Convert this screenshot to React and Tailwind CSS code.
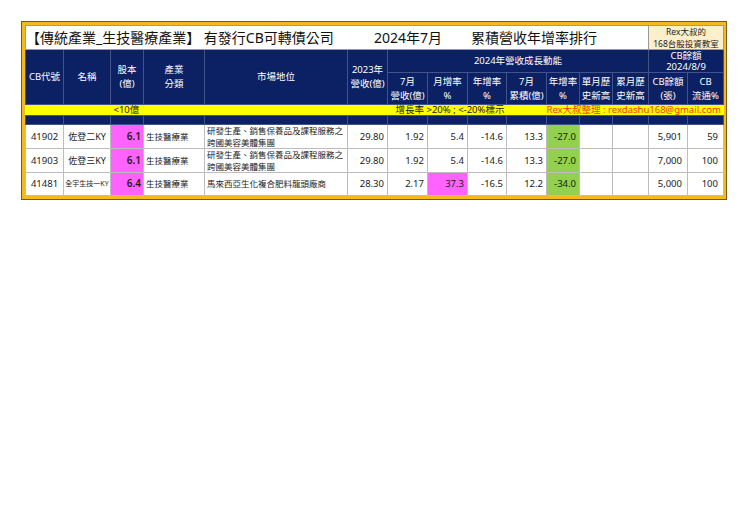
const rows = [
  {
    code: "41902",
    name: "佐登二KY",
    cap: "6.1",
    ind: "生技醫療業",
    pos: ["研發生產、銷售保養品及課程服務之", "跨國美容美體集團"],
    rev: "29.80",
    m: "1.92",
    mom: "5.4",
    yoy: "-14.6",
    cum: "13.3",
    cumYoy: "-27.0",
    cb: "5,901",
    pct: "59",
  },
  {
    code: "41903",
    name: "佐登三KY",
    cap: "6.1",
    ind: "生技醫療業",
    pos: ["研發生產、銷售保養品及課程服務之", "跨國美容美體集團"],
    rev: "29.80",
    m: "1.92",
    mom: "5.4",
    yoy: "-14.6",
    cum: "13.3",
    cumYoy: "-27.0",
    cb: "7,000",
    pct: "100",
  },
  {
    code: "41481",
    name: "全宇生技一KY",
    small: true,
    cap: "6.4",
    ind: "生技醫療業",
    pos: ["馬來西亞生化複合肥料龍頭廠商"],
    rev: "28.30",
    m: "2.17",
    mom: "37.3",
    momHi: true,
    yoy: "-16.5",
    cum: "12.2",
    cumYoy: "-34.0",
    cb: "5,000",
    pct: "100",
  },
];

const th = "border border-[#42528a] font-normal text-center align-middle p-0";
const td = "border border-[#bdbdbd] align-middle p-0";
const num = `${td} text-right pr-[3px] text-[9.5px]`;

export default function App() {
  return (
    <div className="min-h-screen bg-white pl-[21px] pt-[21px] font-['Noto_Sans','Noto_Sans_CJK_TC',sans-serif] text-[#1a1a1a]">
      <div className="w-[706px] border border-[#7a5b08] bg-[#f5b820] p-[3px]">
        <table className="w-[698px] table-fixed border-collapse bg-white">
          <colgroup>
            <col className="w-[38px]" />
            <col className="w-[47px]" />
            <col className="w-[33px]" />
            <col className="w-[61px]" />
            <col className="w-[143px]" />
            <col className="w-[40px]" />
            <col className="w-[40px]" />
            <col className="w-[40px]" />
            <col className="w-[39px]" />
            <col className="w-[40px]" />
            <col className="w-[33px]" />
            <col className="w-[33px]" />
            <col className="w-[36px]" />
            <col className="w-[39px]" />
            <col className="w-[36px]" />
          </colgroup>
          <tbody>
            {/* title */}
            <tr className="h-[23px]">
              <td colSpan={13} className="border border-[#9a9a9a] p-0 align-middle">
                <div className="flex items-center text-[14px] leading-[18px] text-[#111]">
                  <span className="w-[348px] whitespace-nowrap">【傳統產業_生技醫療產業】 有發行CB可轉債公司</span>
                  <span className="w-[97px] whitespace-nowrap">2024年7月</span>
                  <span className="whitespace-nowrap">累積營收年增率排行</span>
                </div>
              </td>
              <td colSpan={2} className="border border-[#9a9a9a] bg-[#fcefcb] p-0 text-center text-[8.5px] leading-[11.5px] text-[#222]">
                <div>Rex大叔的</div>
                <div>168台股投資教室</div>
              </td>
            </tr>

            {/* header */}
            <tr className="h-[22px] bg-[#0c2163] text-white text-[9.5px] leading-[14px]">
              <th rowSpan={2} className={th}>CB代號</th>
              <th rowSpan={2} className={th}>名稱</th>
              <th rowSpan={2} className={th}>股本<br />(億)</th>
              <th rowSpan={2} className={th}>產業<br />分類</th>
              <th rowSpan={2} className={th}>市場地位</th>
              <th rowSpan={2} className={th}>2023年<br />營收(億)</th>
              <th colSpan={7} className={th}>2024年營收成長動能</th>
              <th colSpan={2} className={`${th} text-[9.5px] leading-[11px]`}>CB餘額<br />2024/8/9</th>
            </tr>
            <tr className="h-[32px] bg-[#0c2163] text-white text-[9.5px] leading-[14px]">
              <th className={th}>7月<br />營收(億)</th>
              <th className={th}>月增率<br />%</th>
              <th className={th}>年增率<br />%</th>
              <th className={th}>7月<br />累積(億)</th>
              <th className={th}>年增率<br />%</th>
              <th className={th}>單月歷<br />史新高</th>
              <th className={th}>累月歷<br />史新高</th>
              <th className={th}>CB餘額<br />(張)</th>
              <th className={th}>CB<br />流通%</th>
            </tr>

            {/* legend */}
            <tr className="h-[10px] bg-[#ffff00] text-[9.5px] leading-[10px]">
              <td colSpan={2} className="p-0" />
              <td colSpan={4} className="p-0 pl-[3px] whitespace-nowrap">&lt;10億</td>
              <td colSpan={4} className="p-0 pl-[8px] whitespace-nowrap">增長率 &gt;20% ; &lt;-20%標示</td>
              <td colSpan={5} className="p-0 pr-[8px] text-right whitespace-nowrap text-[#ee3b14]">
                Rex大叔整理 : rexdashu168@gmail.com
              </td>
            </tr>

            {/* spacer */}
            <tr className="h-[9px] bg-[#0c2163]">
              {Array.from({ length: 15 }).map((_, i) => (
                <td key={i} className="border border-[#42528a] p-0" />
              ))}
            </tr>

            {rows.map((r) => (
              <tr key={r.code} className="h-[23px] text-[9.5px] leading-[11.5px]">
                <td className={`${td} text-center`}>{r.code}</td>
                <td className={`${td} text-center whitespace-nowrap ${r.small ? "text-[7px]" : "text-[9px]"}`}>
                  {r.name}
                </td>
                <td className={`${td} bg-[#ff63ff] text-right pr-[2px] font-semibold text-[10px]`}>{r.cap}</td>
                <td className={`${td} pl-[2px] text-[8.5px] whitespace-nowrap`}>{r.ind}</td>
                <td className={`${td} pl-[2px] text-[8.5px] whitespace-nowrap`}>
                  {r.pos.map((p, i) => (
                    <div key={i}>{p}</div>
                  ))}
                </td>
                <td className={num}>{r.rev}</td>
                <td className={num}>{r.m}</td>
                <td className={`${num} ${r.momHi ? "bg-[#ff63ff]" : ""}`}>{r.mom}</td>
                <td className={num}>{r.yoy}</td>
                <td className={num}>{r.cum}</td>
                <td className={`${num} bg-[#92d050]`}>{r.cumYoy}</td>
                <td className={td} />
                <td className={td} />
                <td className={`${num} pr-[5px]`}>{r.cb}</td>
                <td className={`${num} pr-[5px]`}>{r.pct}</td>
              </tr>
            ))}
          </tbody>
        </table>
      </div>
    </div>
  );
}
